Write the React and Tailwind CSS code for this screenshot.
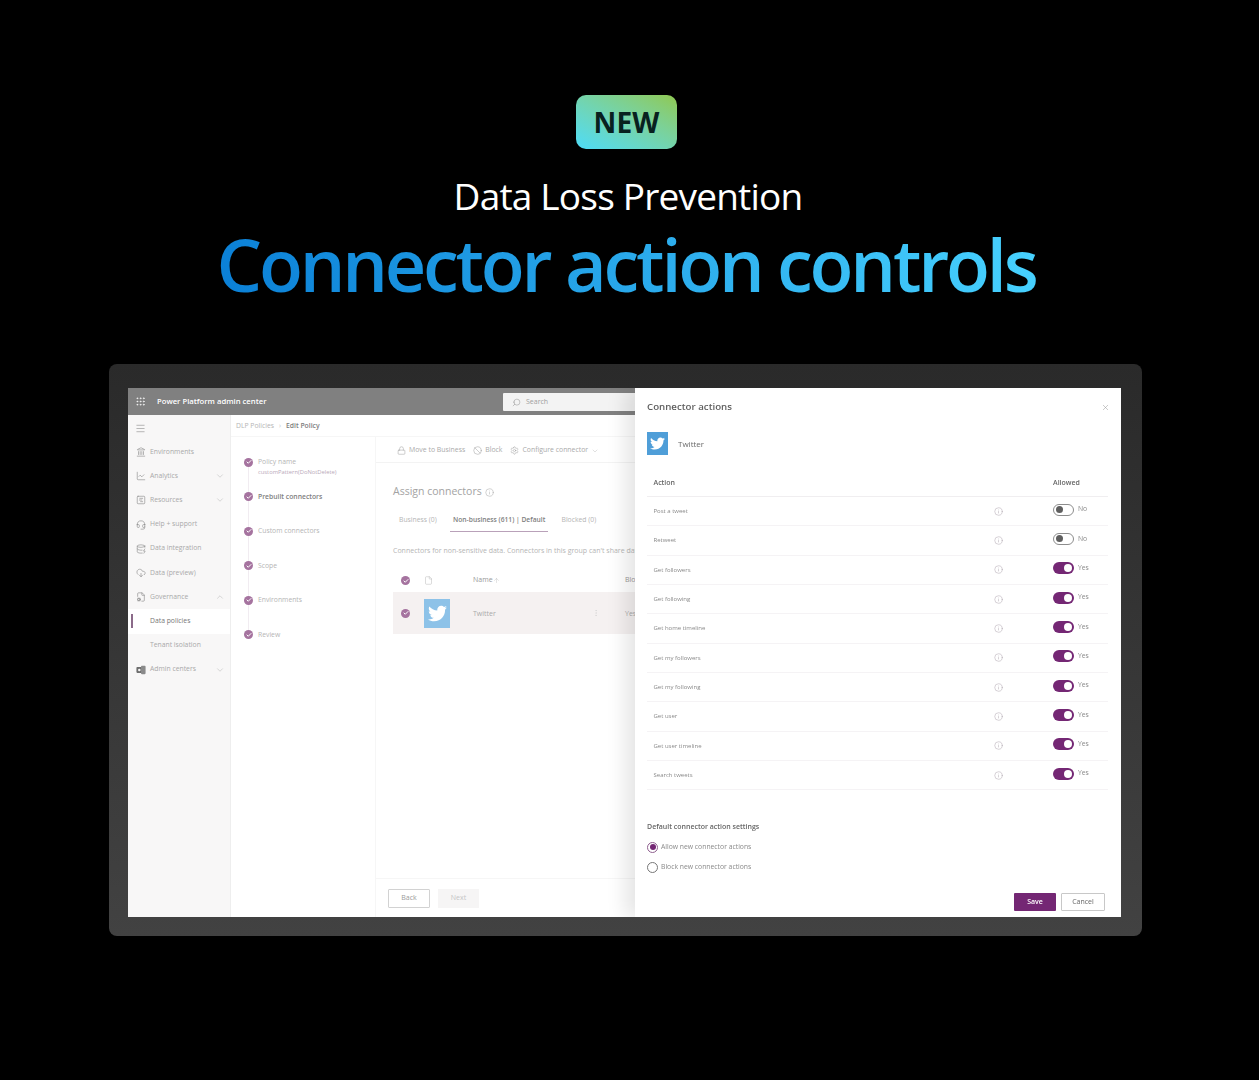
import { FaTwitter } from "react-icons/fa"
import { Grip, Menu, Search, ChevronDown, ChevronUp, X, Lock, Ban, Settings, Info, File, Landmark, ChartLine, SquareChartGantt, Headset, DatabaseZap, CloudDownload, FileCog, Check, ArrowUp, MoreVertical } from "lucide-react"

const font = "font-['Open_Sans','Noto_Sans',sans-serif]"

// office style mark for the Admin centers row
function AdminIcon({ className }) {
  return (
    <svg viewBox="0 0 12 12" className={className}>
      <rect x="0.5" y="2.5" width="7" height="7" rx="1" fill="#6e6e6e" />
      <rect x="6" y="1" width="5.5" height="10" rx="1" fill="#8a8a8a" />
      <circle cx="4" cy="6" r="1.5" fill="#f8f7f7" />
    </svg>
  )
}

const navItems = [
  { label: "Environments", icon: Landmark },
  { label: "Analytics", icon: ChartLine, chevron: "down" },
  { label: "Resources", icon: SquareChartGantt, chevron: "down" },
  { label: "Help + support", icon: Headset },
  { label: "Data integration", icon: DatabaseZap },
  { label: "Data (preview)", icon: CloudDownload },
  { label: "Governance", icon: FileCog, chevron: "up" },
  { label: "Data policies", active: true },
  { label: "Tenant isolation" },
  { label: "Admin centers", icon: AdminIcon, chevron: "down" },
]

const steps = [
  { label: "Policy name", sub: "customPattern(DoNotDelete)" },
  { label: "Prebuilt connectors", bold: true },
  { label: "Custom connectors" },
  { label: "Scope" },
  { label: "Environments" },
  { label: "Review" },
]

const actions = [
  ["Post a tweet", false],
  ["Retweet", false],
  ["Get followers", true],
  ["Get following", true],
  ["Get home timeline", true],
  ["Get my followers", true],
  ["Get my following", true],
  ["Get user", true],
  ["Get user timeline", true],
  ["Search tweets", true],
]

function CheckDot() {
  return (
    <span className="w-[9px] h-[9px] rounded-full bg-[#a5739f] flex items-center justify-center shrink-0">
      <Check className="w-[6px] h-[6px] text-white" strokeWidth={4} />
    </span>
  )
}

function Sidebar() {
  return (
    <div className="w-[103px] shrink-0 bg-[#f8f7f7] border-r border-[#eeeeee] pt-[8px]">
      <Menu className="w-[11px] h-[11px] ml-[7px] mb-[6px] text-[#999999]" strokeWidth={1.5} />
      {navItems.map((item) => (
        <div key={item.label} className={`h-[24.2px] flex items-center relative ${item.active ? "bg-white" : ""}`}>
          {item.active && <span className="absolute left-[3px] top-[5px] w-[1.5px] h-[14px] bg-[#8b6a89]" />}
          <span className="w-[22px] pl-[8px] shrink-0">
            {item.icon && <item.icon className="w-[10px] h-[10px] text-[#8a8a8a]" strokeWidth={1.5} />}
          </span>
          <span className={`text-[6.8px] leading-none ${item.active ? "text-[#777777]" : "text-[#a9a9a9]"}`}>{item.label}</span>
          {item.chevron === "down" && <ChevronDown className="absolute right-[5px] w-[10px] h-[10px] text-[#b5b5b5]" strokeWidth={1.25} />}
          {item.chevron === "up" && <ChevronUp className="absolute right-[5px] w-[10px] h-[10px] text-[#b5b5b5]" strokeWidth={1.25} />}
        </div>
      ))}
    </div>
  )
}

function Stepper() {
  return (
    <div className="w-[144px] shrink-0 pt-[20.5px] pl-[13px] relative">
      <span className="absolute left-[17px] top-[27px] w-px h-[172px] bg-[#f1ecf1]" />
      {steps.map((step) => (
        <div key={step.label} className="h-[34.5px] flex items-start gap-[5px] relative">
          <CheckDot />
          <div className="flex flex-col gap-[3px] -mt-[0.5px]">
            <span className={`text-[6.8px] leading-[9px] ${step.bold ? "text-[#808080] font-semibold" : "text-[#b5b5b5]"}`}>{step.label}</span>
            {step.sub && <span className="text-[5.8px] leading-[7px] text-[#b9a9b9] whitespace-nowrap">{step.sub}</span>}
          </div>
        </div>
      ))}
    </div>
  )
}

function BackPage() {
  return (
    <div className="flex-1 min-w-0 flex flex-col overflow-hidden">
      <div className="h-[27px] shrink-0 bg-[#808080] flex items-center relative">
        <Grip className="w-[11px] h-[11px] ml-[7px] text-white" strokeWidth={1.5} />
        <span className="ml-[11px] pt-[1px] text-[7.7px] font-semibold text-white whitespace-nowrap">Power Platform admin center</span>
        <div className="absolute left-[375px] top-[5px] w-[200px] h-[18px] bg-[#f3f3f3] rounded-[1px] flex items-center pl-[9px] gap-[5px]">
          <Search className="w-[9px] h-[9px] text-[#8a8a8a] -scale-x-100" strokeWidth={1.25} />
          <span className="pt-[1px] text-[7px] text-[#a0a0a0]">Search</span>
        </div>
      </div>
      <div className="flex-1 flex min-h-0 bg-white">
        <Sidebar />
        <div className="flex-1 min-w-0 flex flex-col">
          <div className="h-[22px] shrink-0 flex items-center pl-[5px] pt-[2px] text-[6.8px] border-b border-[#f6f6f6]">
            <span className="text-[#b5b5b5]">DLP Policies</span>
            <span className="text-[#c5c5c5] mx-[5px]">›</span>
            <span className="text-[#7d7d7d] font-semibold">Edit Policy</span>
          </div>
          <div className="flex-1 flex min-h-0">
            <Stepper />
            <div className="flex-1 min-w-0 flex flex-col border-l border-[#f6f6f6]">
              <div className="h-[26px] shrink-0 flex items-center pl-[21px] pt-[2px] text-[6.9px] text-[#aaaaaa] border-b border-[#f3f3f3] whitespace-nowrap">
                <Lock className="w-[9px] h-[9px] mr-[3px] text-[#999999]" strokeWidth={1.25} />
                <span>Move to Business</span>
                <Ban className="w-[9px] h-[9px] ml-[8px] mr-[3px] text-[#999999]" strokeWidth={1.25} />
                <span>Block</span>
                <Settings className="w-[9px] h-[9px] ml-[8px] mr-[3px] text-[#999999]" strokeWidth={1.25} />
                <span>Configure connector</span>
                <ChevronDown className="w-[8px] h-[8px] ml-[3px] text-[#b5b5b5]" strokeWidth={1.25} />
              </div>
              <div className="flex-1 min-h-0 pl-[17px] pt-[21px] overflow-hidden">
                <div className="flex items-center gap-[3px] h-[16px] text-[10.5px] text-[#a3a3a3] whitespace-nowrap">
                  Assign connectors <Info className="w-[9px] h-[9px] text-[#a3a3a3]" strokeWidth={1.25} />
                </div>
                <div className="flex mt-[8px] h-[24px] text-[6.8px] whitespace-nowrap">
                  <span className="w-[57px] pl-[6px] pt-[7px] text-[#b5b5b5]">Business (0)</span>
                  <span className="px-[3px] pt-[7px] w-[97.5px] text-[6.7px] text-[#808080] font-semibold border-b border-[#b9a1b9]">Non-business (611) | Default</span>
                  <span className="pl-[14px] pt-[7px] text-[#b5b5b5]">Blocked (0)</span>
                </div>
                <p className="mt-[13.5px] text-[7px] leading-[9px] text-[#b5b5b5] whitespace-nowrap">Connectors for non-sensitive data. Connectors in this group can't share data with others</p>
                <div className="flex items-center h-[23px] mt-[14.5px] relative text-[7px] text-[#999999] whitespace-nowrap">
                  <span className="ml-[8px]"><CheckDot /></span>
                  <File className="w-[9px] h-[9px] ml-[14px] text-[#b5b5b5]" strokeWidth={1.25} />
                  <span className="ml-[40px]">Name</span>
                  <ArrowUp className="w-[7px] h-[7px] text-[#b5b5b5]" strokeWidth={1.25} />
                  <span className="absolute left-[232px]">Blocked</span>
                </div>
                <div className="flex items-center h-[42px] bg-[#f5f1f1] relative text-[7px] text-[#aaaaaa] whitespace-nowrap">
                  <span className="ml-[8px]"><CheckDot /></span>
                  <span className="w-[26px] h-[29px] ml-[14px] bg-[#8dc2e8] flex items-center justify-center">
                    <FaTwitter className="w-[19px] h-[19px] text-white" />
                  </span>
                  <span className="ml-[23px] pt-[2px]">Twitter</span>
                  <MoreVertical className="absolute left-[199px] w-[8px] h-[8px] text-[#c5c5c5]" strokeWidth={1} />
                  <span className="absolute left-[232px] top-[17px]">Yes</span>
                </div>
              </div>
              <div className="h-[39px] shrink-0 border-t border-[#f6f6f6] flex items-center pl-[12px] gap-[8px] text-[7px]">
                <span className="w-[42px] h-[19px] border border-[#d2d2d2] rounded-[1px] flex items-center justify-center text-[#9a9a9a]">Back</span>
                <span className="w-[41px] h-[19px] bg-[#f6f5f5] flex items-center justify-center text-[#c5c5c5]">Next</span>
              </div>
            </div>
          </div>
        </div>
      </div>
    </div>
  )
}

function Toggle({ on }) {
  return (
    <div className="flex items-center gap-[4px] -mt-[3px]">
      <span className={`w-[21px] h-[12px] rounded-full flex items-center ${on ? "bg-[#742774] justify-end px-[2px]" : "bg-white border border-[#8c8c8c] px-[2px]"}`}>
        <span className={`rounded-full ${on ? "w-[8px] h-[8px] bg-white" : "w-[7px] h-[7px] bg-[#5f5f5f]"}`} />
      </span>
      <span className="text-[6.8px] leading-none text-[#8a8a8a]">{on ? "Yes" : "No"}</span>
    </div>
  )
}

function Panel() {
  return (
    <div className="w-[486px] shrink-0 bg-white flex flex-col shadow-[-10px_0_18px_rgba(0,0,0,0.1)] relative pl-[12px] pr-[13px]">
      <X className="absolute right-[11px] top-[15px] w-[9px] h-[9px] text-[#8f8f8f]" strokeWidth={1.25} />
      <div className="h-[38px] shrink-0 flex items-center text-[9.7px] font-semibold text-[#5e5e5e]">Connector actions</div>
      <div className="flex items-center h-[23px] shrink-0 mt-[6px]">
        <span className="w-[21px] h-[23px] bg-[#4f9ed8] flex items-center justify-center">
          <FaTwitter className="w-[15px] h-[15px] text-white" />
        </span>
        <span className="ml-[10px] text-[8px] font-medium text-[#6b6b6b]">Twitter</span>
      </div>
      <div className="flex h-[31px] mt-[11px] shrink-0 items-center border-b border-[#f0eef0] text-[7px] font-semibold text-[#666666] pl-[6.5px] pt-[5px]">
        <span className="flex-1">Action</span>
        <span className="w-[55px]">Allowed</span>
      </div>
      {actions.map(([label, on]) => (
        <div key={label} className="h-[29.33px] shrink-0 flex items-center border-b border-[#f5f3f5] pl-[6.5px]">
          <span className="flex-1 pt-[1px] text-[6px] text-[#8a8a8a]">{label}</span>
          <Info className="w-[9px] h-[9px] mr-[50px] text-[#a99fa9]" strokeWidth={1.25} />
          <div className="w-[55px]"><Toggle on={on} /></div>
        </div>
      ))}
      <div className="mt-[32px] text-[7px] leading-[9px] font-semibold text-[#666666]">Default connector action settings</div>
      <div className="mt-[6px] flex items-center gap-[3px] h-[20px]">
        <span className="w-[11px] h-[11px] rounded-full border border-[#8f5f8f] flex items-center justify-center">
          <span className="w-[6px] h-[6px] rounded-full bg-[#742774]" />
        </span>
        <span className="text-[6.8px] text-[#8a8a8a]">Allow new connector actions</span>
      </div>
      <div className="flex items-center gap-[3px] h-[20px]">
        <span className="w-[11px] h-[11px] rounded-full border border-[#777777]" />
        <span className="text-[6.8px] text-[#8a8a8a]">Block new connector actions</span>
      </div>
      <div className="flex justify-end gap-[5px] pr-[3px] mt-[16px] text-[7px]">
        <span className="w-[42px] h-[18px] bg-[#742774] rounded-[1px] flex items-center justify-center text-white font-semibold">Save</span>
        <span className="w-[44px] h-[18px] border border-[#c8c8c8] rounded-[1px] flex items-center justify-center text-[#666666]">Cancel</span>
      </div>
    </div>
  )
}

export default function App() {
  return (
    <div className={`w-[1259px] h-[1080px] bg-black ${font}`}>
      <div className="w-[1256px] flex flex-col items-center pt-[95px]">
        <div className="mr-[3px] w-[101px] h-[54px] rounded-[10px] bg-linear-to-tr from-[#4cdcf8] to-[#90c84e] flex items-center justify-center text-[28px] font-bold text-[#08211f] tracking-[0.2px]">NEW</div>
        <h2 className="mt-[22px] h-[50px] text-[37px] leading-[50px] text-white font-normal tracking-[-0.8px]">Data Loss Prevention</h2>
        <h1 className="mt-[2px] mr-[4px] h-[82px] text-[72px] leading-[82px] bg-linear-[75deg] from-[#0a7fd6] to-[#48d2ff] bg-clip-text text-transparent font-semibold tracking-[-3.2px] whitespace-nowrap">Connector action controls</h1>
        <div className="mr-[5px] mt-[59px] w-[1033px] h-[572px] rounded-[8px] bg-linear-to-b from-[#2a2a2a] to-[#424242] pt-[24px] pl-[19px] pr-[21px] pb-[19px]">
          <div className="h-[529px] flex overflow-hidden blur-[0.3px]">
            <BackPage />
            <Panel />
          </div>
        </div>
      </div>
    </div>
  )
}
